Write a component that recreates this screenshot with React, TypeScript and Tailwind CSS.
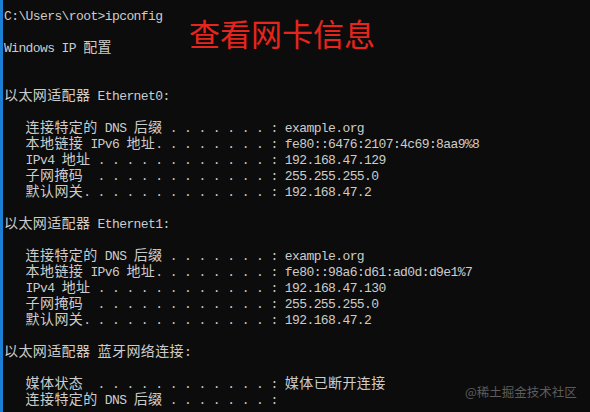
const lines: string[] = [
  "C:\\Users\\root>ipconfig",
  "",
  "Windows IP 配置",
  "",
  "",
  "以太网适配器 Ethernet0:",
  "",
  "   连接特定的 DNS 后缀 . . . . . . . : example.org",
  "   本地链接 IPv6 地址. . . . . . . . : fe80::6476:2107:4c69:8aa9%8",
  "   IPv4 地址 . . . . . . . . . . . . : 192.168.47.129",
  "   子网掩码  . . . . . . . . . . . . : 255.255.255.0",
  "   默认网关. . . . . . . . . . . . . : 192.168.47.2",
  "",
  "以太网适配器 Ethernet1:",
  "",
  "   连接特定的 DNS 后缀 . . . . . . . : example.org",
  "   本地链接 IPv6 地址. . . . . . . . : fe80::98a6:d61:ad0d:d9e1%7",
  "   IPv4 地址 . . . . . . . . . . . . : 192.168.47.130",
  "   子网掩码  . . . . . . . . . . . . : 255.255.255.0",
  "   默认网关. . . . . . . . . . . . . : 192.168.47.2",
  "",
  "以太网适配器 蓝牙网络连接:",
  "",
  "   媒体状态  . . . . . . . . . . . . : 媒体已断开连接",
  "   连接特定的 DNS 后缀 . . . . . . . : ",
];

const wide = /[\u2e80-\u9fff\uff00-\uffef]/;

// split a line into runs of wide (2-cell) and narrow (1-cell) characters
function runs(text: string) {
  const out: { wide: boolean; text: string }[] = [];
  for (const ch of text) {
    const w = wide.test(ch);
    const last = out[out.length - 1];
    if (last && last.wide === w) last.text += ch;
    else out.push({ wide: w, text: ch });
  }
  return out;
}

function Line({ text }: { text: string }) {
  return (
    <div className="h-[16px] leading-[16px] whitespace-pre">
      {runs(text).map((r, i) =>
        r.wide ? (
          <span
            key={i}
            className="font-['Noto_Sans_CJK_SC',sans-serif] text-[14px] leading-[16px] tracking-[0.4px]"
          >
            {r.text}
          </span>
        ) : (
          <span
            key={i}
            className="font-['Liberation_Mono',monospace] text-[13px] leading-[16px] tracking-[-0.6px]"
          >
            {r.text}
          </span>
        )
      )}
    </div>
  );
}

export default function App() {
  return (
    <div className="relative flex w-[590px] h-[412px] overflow-hidden bg-[#0c0c0c] text-[#cccccc]">
      <div className="w-[3px] shrink-0 bg-[#1b7fd4]" />
      <div className="pl-[1px] pt-[6px]">
        {lines.map((l, i) => (
          <Line key={i} text={l} />
        ))}
      </div>

      <div className="absolute left-[189px] top-[17px] font-['Noto_Sans_CJK_SC',sans-serif] text-[31px] leading-[31px] text-[#e8251c]">
        查看网卡信息
      </div>

      <div className="absolute left-[465px] top-[383px] font-['Noto_Sans_CJK_SC',sans-serif] text-[12.5px] leading-[18px] text-[#5c5c5c]">
        @稀土掘金技术社区
      </div>
    </div>
  );
}
